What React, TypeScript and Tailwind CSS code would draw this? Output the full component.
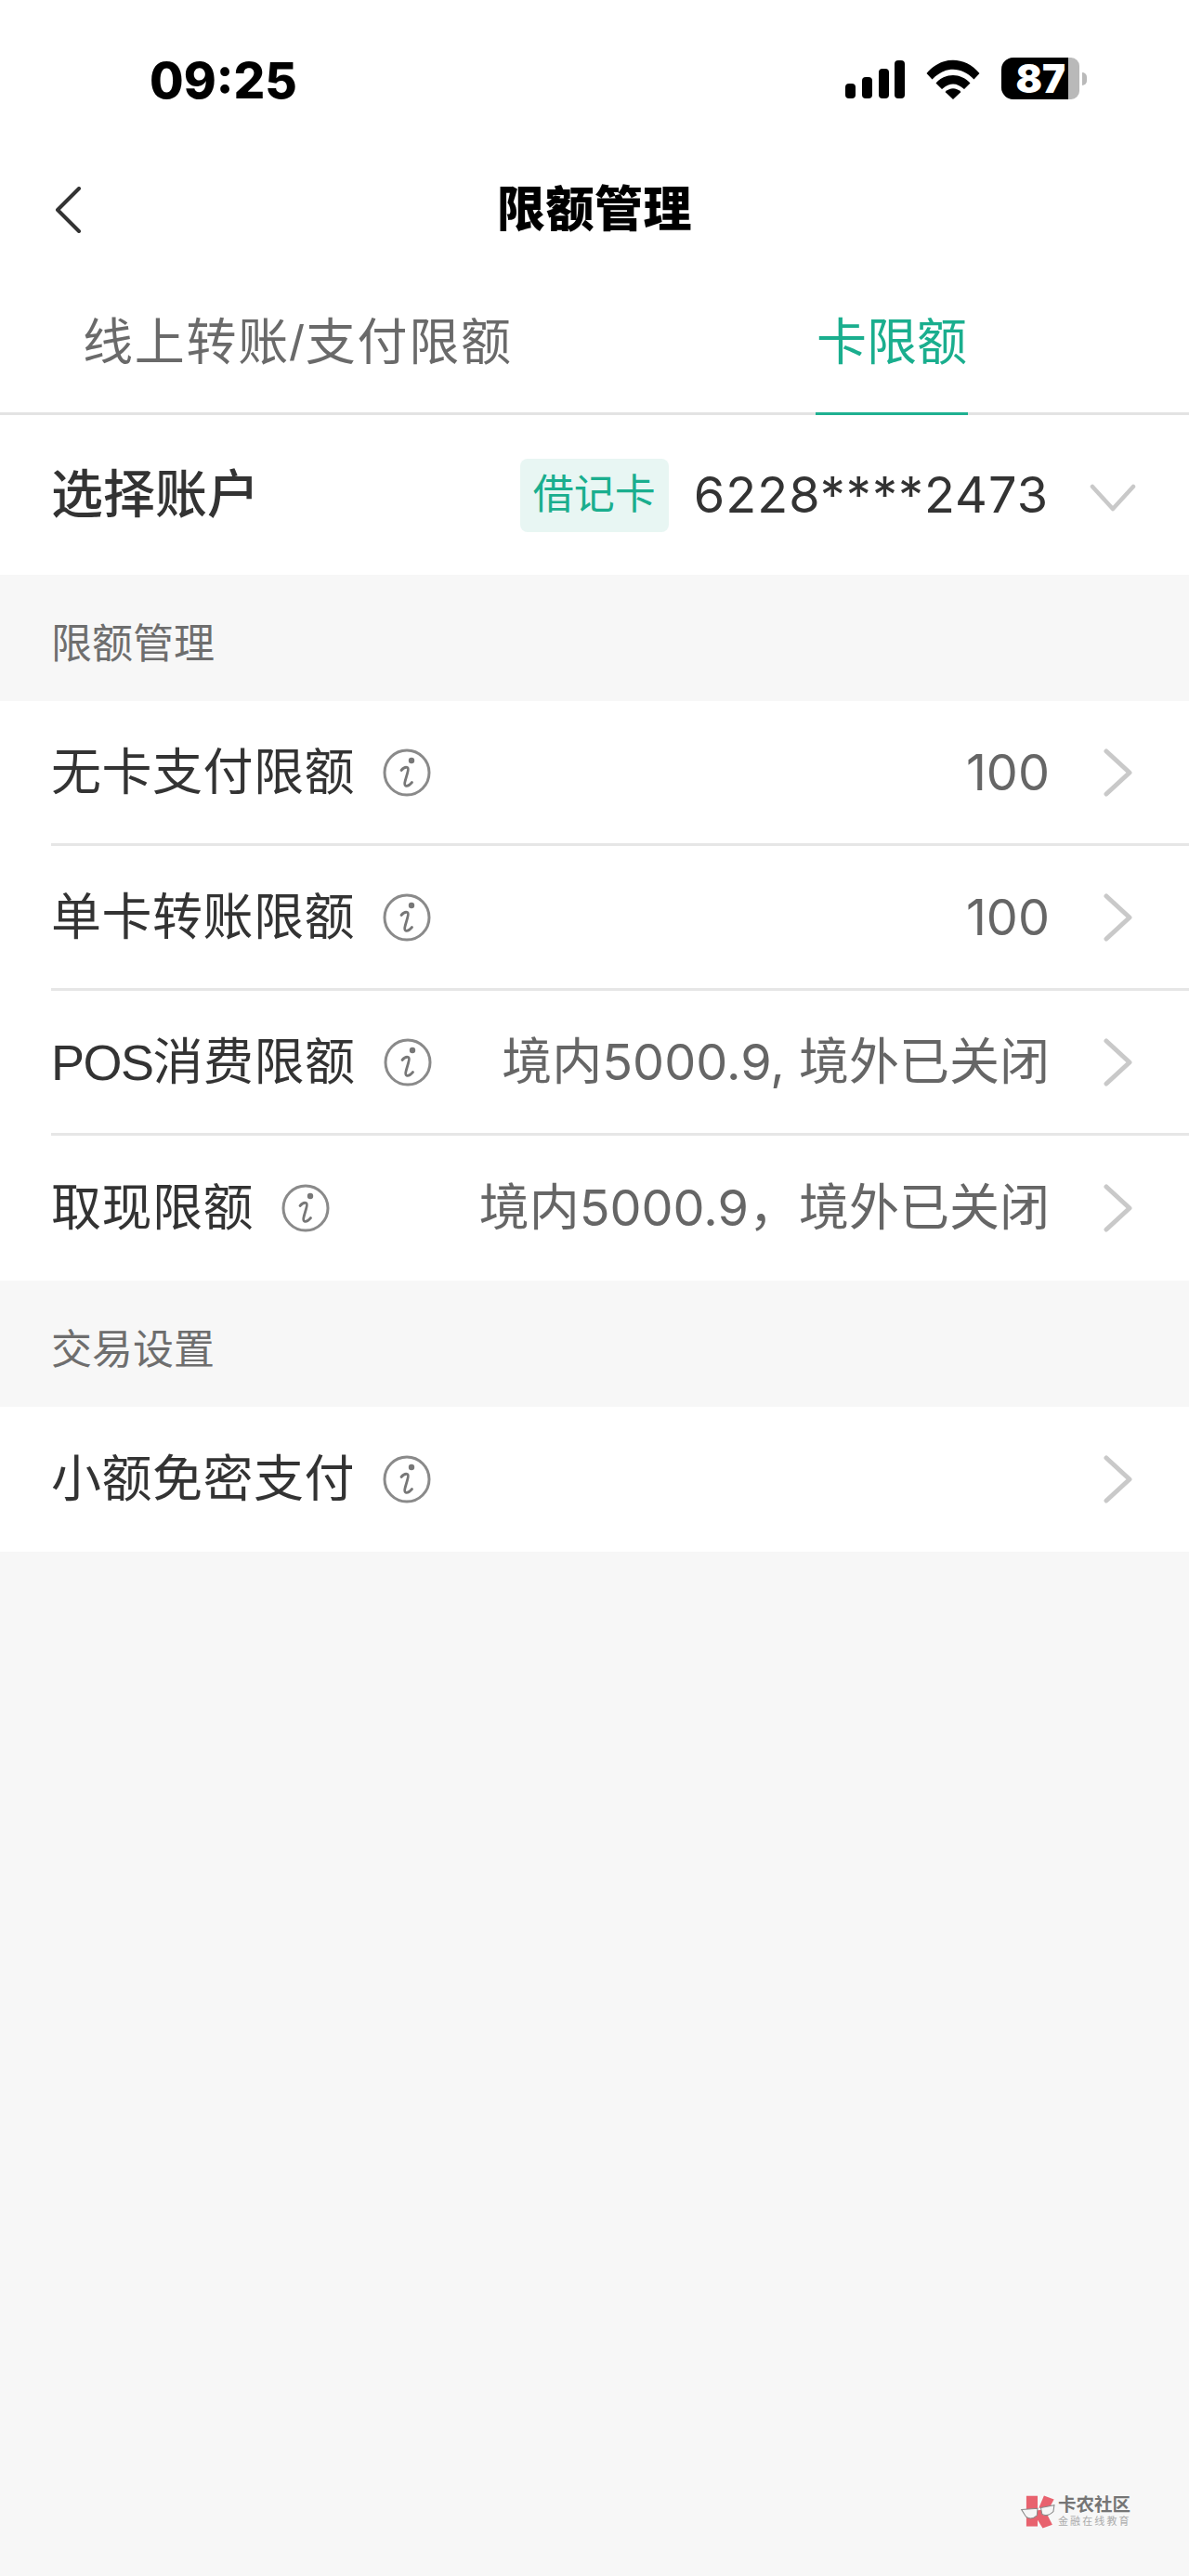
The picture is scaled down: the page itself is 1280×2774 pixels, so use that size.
import React from "react";

function Chevron() {
  return (
    <svg width="33" height="52" viewBox="0 0 33 52" fill="none" className="shrink-0">
      <polyline points="4,3 29,26 4,49" stroke="#c9c9c9" strokeWidth="5" strokeLinecap="round" strokeLinejoin="round" />
    </svg>
  );
}

function Info() {
  return (
    <svg width="52" height="52" viewBox="0 0 52 52" fill="none" className="shrink-0">
      <circle cx="26" cy="26" r="24" stroke="#8a8a8a" strokeWidth="3" />
      <circle cx="31" cy="13" r="3.2" fill="#777777" />
      <path d="M20 23.500c2-2.400 5-3.600 6.600-3 1.500.7.9 3-.1 6.400l-2.200 7.600c-.9 3.200-1 5 .5 5.600 1.700.6 4.500-1 6.700-3.600" stroke="#777777" strokeWidth="2.800" strokeLinecap="round" />
    </svg>
  );
}

function Row({ label, value, last }: { label: React.ReactNode; value?: string; last?: boolean }) {
  return (
    <div className="bg-white pl-[55px]">
      <div className={`flex h-[156px] items-center pr-[60px] ${last ? "" : "border-b-[3px] border-[#e6e6e6]"}`}>
        <span className="text-[54px] leading-none tracking-[0.5px] text-[#333333]">{label}</span>
        <span className="ml-[30px] flex"><Info /></span>
        <span className="ml-auto mr-[57px] whitespace-pre font-['Inter','Noto_Sans_CJK_SC',sans-serif] text-[54px] leading-none text-[#666666]">{value}</span>
        <Chevron />
      </div>
    </div>
  );
}

function Section({ title }: { title: string }) {
  return (
    <div className="flex h-[136px] items-center bg-[#f7f7f7] pl-[55px] pt-[14px] text-[44px] leading-none text-[#6e6e6e]">{title}</div>
  );
}

function StatusBar() {
  return (
    <div className="flex h-[170px] items-start justify-between pl-[161px] pr-[110px] pt-[62px]">
      <span className="font-['Inter',sans-serif] text-[53px] font-extrabold leading-[50px] text-black">09:25</span>
      <div className="flex items-start">
        <svg width="66" height="42" viewBox="0 0 66 42" className="mt-[3px]">
          <rect x="1" y="25" width="11" height="16" rx="4" fill="#000" />
          <rect x="19" y="18" width="11" height="23" rx="4" fill="#000" />
          <rect x="37" y="9" width="11" height="32" rx="4" fill="#000" />
          <rect x="54" y="0" width="11" height="41" rx="4" fill="#000" />
        </svg>
        <svg width="58" height="43" viewBox="0 0 58 43" className="ml-[22px] mt-[2px]">
          <path d="M0.500 15 C16 -4 42 -4 57.500 15 L51.500 21.500 C38 7 20 7 6.500 21.500 Z" fill="#000" />
          <path d="M10.500 25.500 C21 14 37 14 47.500 25.500 L41 32 C33 24.500 25 24.500 17 32 Z" fill="#000" />
          <path d="M20.500 35 C26 30 32 30 37.500 35 L29 43 Z" fill="#000" />
        </svg>
        <div className="ml-[23px] flex items-center">
          <div className="flex h-[45px] w-[84px] rounded-l-[13px] rounded-r-[9px] bg-[#b9b9b9]">
            <div className="flex h-full w-[72px] items-center justify-end rounded-l-[13px] bg-black pr-[3px] font-['Inter',sans-serif] text-[42px] font-black leading-none text-white">87</div>
          </div>
          <div className="ml-[3px] h-[14px] w-[5px] rounded-r-full bg-[#b9b9b9]" />
        </div>
      </div>
    </div>
  );
}

export default function App() {
  return (
    <div className="relative h-[2774px] w-[1280px] overflow-hidden bg-[#f7f7f7] font-['Liberation_Sans','Noto_Sans_CJK_SC',sans-serif]">
      <div className="bg-white">
        <StatusBar />
        <div className="relative flex h-[112px] items-center justify-center">
          <svg width="30" height="50" viewBox="0 0 30 50" fill="none" className="absolute left-[58px] top-[31px]">
            <polyline points="27,2 4,25 27,48" stroke="#333333" strokeWidth="4" strokeLinecap="round" strokeLinejoin="round" />
          </svg>
          <span className="text-[52px] font-black leading-none tracking-[0.5px] text-black">限额管理</span>
        </div>
        <div className="flex h-[165px] items-stretch justify-between border-b-[3px] border-[#e3e3e3] pl-[89px] pr-[238px]">
          <span className="pt-[60px] text-[54px] leading-none tracking-[1.750px] text-[#6a6a6a]">线上转账/支付限额</span>
          <span className="-mb-[3px] w-[164px] border-b-[3px] border-[#1fb091] pt-[60px] text-center text-[54px] leading-none text-[#1aae8e]">卡限额</span>
        </div>
        <div className="flex h-[172px] items-center pl-[55px] pr-[57px]">
          <span className="text-[56px] font-medium leading-none text-[#333333]">选择账户</span>
          <span className="ml-auto flex h-[79px] w-[160px] items-center justify-center rounded-[8px] bg-[#e8f6f3] text-[44px] leading-none text-[#1aae8e]">借记卡</span>
          <span className="ml-[27px] font-['Inter',sans-serif] text-[54px] leading-none tracking-[1px] text-[#333333]">6228****2473</span>
          <svg width="50" height="30" viewBox="0 0 50 30" fill="none" className="ml-[44px] mt-[5px]">
            <polyline points="3,3 25,27 47,3" stroke="#c9c9c9" strokeWidth="4.500" strokeLinecap="round" strokeLinejoin="round" />
          </svg>
        </div>
      </div>

      <Section title="限额管理" />
      <Row label="无卡支付限额" value="100" />
      <Row label="单卡转账限额" value="100" />
      <Row label={<><span className="tracking-[-1.500px]">POS</span>消费限额</>} value="境内5000.9, 境外已关闭" />
      <Row label="取现限额" value="境内5000.9，境外已关闭" last />
      <Section title="交易设置" />
      <Row label="小额免密支付" last />

      <div className="absolute left-[1098px] top-[2686px] flex items-start">
        <svg width="38" height="38" viewBox="115 80 110 110">
          <path d="M135 85 L170 85 L170 180 L135 180 Z" fill="#e8626e" />
          <path d="M174 122 L190 84 L221 96 L204 128 Z" fill="#e8626e" />
          <path d="M170 130 L192 128 L216 175 L186 186 L170 160 Z" fill="#e8626e" />
          <path d="M120 128 L170 124 L168 146 Q150 162 134 150 Z" fill="#f6f6f6" stroke="#8a8a8a" strokeWidth="3" />
          <path d="M180 122 L222 114 L219 134 Q200 152 184 142 Z" fill="#f6f6f6" stroke="#8a8a8a" strokeWidth="3" />
        </svg>
        <div className="ml-[3px] flex flex-col">
          <span className="text-[19.500px] font-bold leading-[22px] text-[#757575]">卡农社区</span>
          <span className="mt-[1px] text-[11px] leading-[13px] tracking-[2.100px] text-[#ababab]">金融在线教育</span>
        </div>
      </div>
    </div>
  );
}
